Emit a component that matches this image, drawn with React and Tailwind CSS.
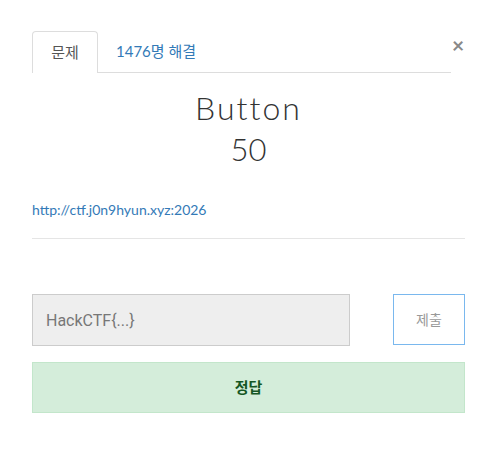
import React, { useState } from "react";

export default function App() {
  const [flag, setFlag] = useState("");

  return (
    <div
      className="w-[497px] h-[461px] bg-white"
      style={{ fontFamily: "Lato, 'Noto Sans CJK KR', sans-serif" }}
    >
      <div className="px-[32px] pt-[31px]">
        <div className="flex items-start">
          <ul className="flex flex-1 border-b border-[#dddddd] h-[42px]">
            <li className="h-[42px] w-[66px] flex items-center justify-center border border-b-0 border-[#dddddd] rounded-t-[4px] bg-white text-[15px] text-[#555555] -mb-px">
              문제
            </li>
            <li className="h-[41px] flex items-center pl-[18px] text-[15px] text-[#337ab7]">
              1476명 해결
            </li>
          </ul>
          <button className="w-[14px] mt-[3px] text-[21px] leading-none font-bold text-[#888888]">
            ×
          </button>
        </div>

        <div className="text-center mt-[16px]">
          <h3 className="text-[32px] leading-[38px] font-light tracking-[2px] text-[#333333]">
            Button
          </h3>
          <p className="text-[31px] leading-[36px] font-light text-[#333333] mt-[4px]">
            50
          </p>
        </div>

        <div className="mt-[32px] leading-[20px]">
          <a className="text-[14px] text-[#337ab7]" href="#">
            http://ctf.j0n9hyun.xyz:2026
          </a>
        </div>
        <hr className="mt-[18px] border-t border-[#e5e5e5]" />

        <form className="mt-[55px]" onSubmit={(e) => e.preventDefault()}>
          <div className="flex justify-between">
            <input
              className="w-[318px] h-[52px] bg-[#eeeeee] border border-[#cccccc] px-[13px] text-[16px] text-[#555] placeholder:text-[#777777] outline-none"
              style={{ fontFamily: "Roboto, 'Noto Sans CJK KR', sans-serif" }}
              placeholder="HackCTF{...}"
              value={flag}
              onChange={(e) => setFlag(e.target.value)}
            />
            <button
              type="submit"
              className="w-[72px] h-[51px] border border-[#7ab8ee] bg-white text-[14px] text-[#999999]"
            >
              제출
            </button>
          </div>
          <div className="mt-[16px] h-[51px] flex items-center justify-center bg-[#d4edda] border border-[#c3e6cb] text-[15px] font-bold text-[#155724]">
            정답
          </div>
        </form>
      </div>
    </div>
  );
}
